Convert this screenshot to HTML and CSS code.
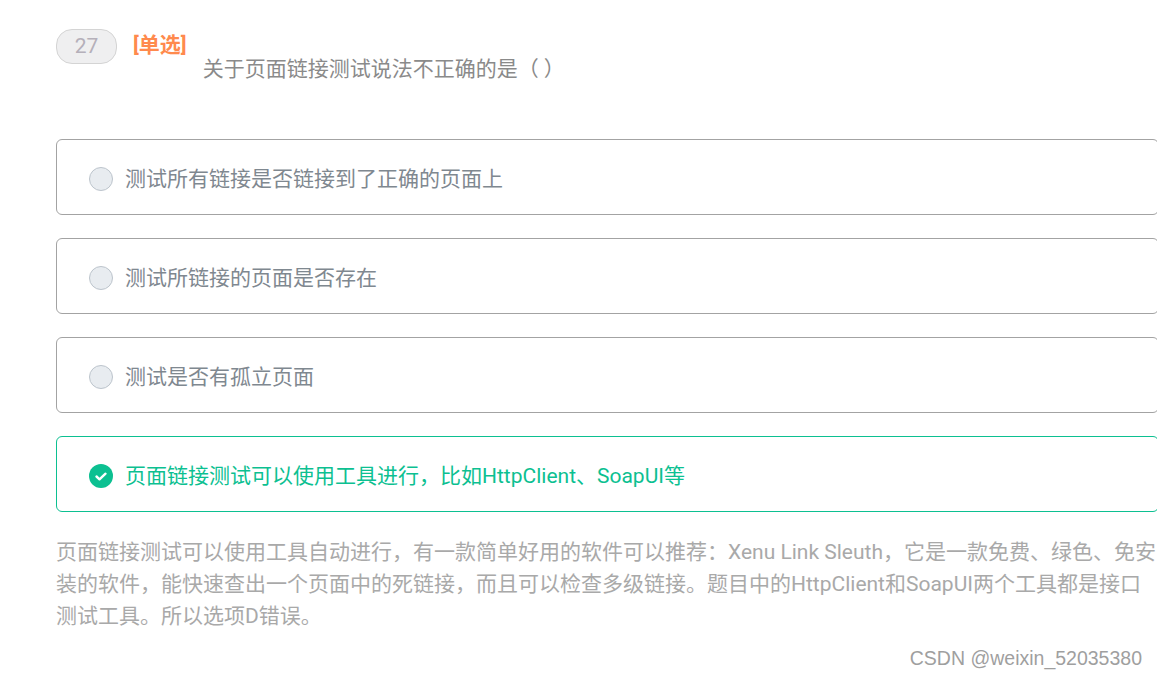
FILE: index.html
```html
<!DOCTYPE html>
<html lang="zh-CN">
<head>
    <meta charset="UTF-8">
    <title>单选题</title>
    <link rel="stylesheet" href="styles.css">
</head>
<body>
    <div class="container">
        <div class="question">
            <span class="question-number">27</span>
            <span class="question-type">[单选]</span>
            <p class="question-text">关于页面链接测试说法不正确的是（ ）</p>
        </div>
        <div class="options">
            <div class="option">
                <span class="radio"></span>
                <span>测试所有链接是否链接到了正确的页面上</span>
            </div>
            <div class="option">
                <span class="radio"></span>
                <span>测试所链接的页面是否存在</span>
            </div>
            <div class="option">
                <span class="radio"></span>
                <span>测试是否有孤立页面</span>
            </div>
            <div class="option correct">
                <svg class="check" viewBox="0 0 24 24">
                    <circle cx="12" cy="12" r="12" fill="#0cc091"/>
                    <path d="M7.5 12.5l3 2.8 6-5.6" fill="none" stroke="#fff" stroke-width="2.4" stroke-linecap="round" stroke-linejoin="round"/>
                </svg>
                <span>页面链接测试可以使用工具进行，比如HttpClient、SoapUI等</span>
            </div>
        </div>
        <p class="analysis">页面链接测试可以使用工具自动进行，有一款简单好用的软件可以推荐：Xenu Link Sleuth，它是一款免费、绿色、免安装的软件，能快速查出一个页面中的死链接，而且可以检查多级链接。题目中的HttpClient和SoapUI两个工具都是接口测试工具。所以选项D错误。</p>
        <div class="watermark">CSDN @weixin_52035380</div>
    </div>
</body>
</html>
```

FILE: styles.css
```css
html, body {
    margin: 0;
    padding: 0;
    background-color: #fff;
    overflow: hidden;
}
body {
    font-family: Roboto, "Noto Sans CJK SC", sans-serif;
}
.container {
    height: 676px;
    padding: 29px 0 0 56px;
    box-sizing: border-box;
}
.question {
    display: flex;
    align-items: flex-start;
    height: 110px;
}
.question-number {
    width: 59px;
    height: 33px;
    border: 1px solid #d4d4d4;
    border-radius: 16px;
    background-color: #efeff0;
    color: #b5b0ba;
    font-size: 21px;
    line-height: 33px;
    text-align: center;
}
.question-type {
    margin-left: 16px;
    color: #ff8a4d;
    font-size: 21px;
    font-weight: 700;
    line-height: 33px;
}
.question-text {
    margin: 23px 0 0 16px;
    color: #8a8a8a;
    font-size: 21px;
    line-height: 34px;
}
.options {
    display: flex;
    flex-direction: column;
    gap: 23px;
}
.option {
    display: flex;
    align-items: center;
    gap: 12px;
    width: 1103px;
    height: 76px;
    padding-left: 32px;
    padding-bottom: 1px;
    box-sizing: border-box;
    border: 1px solid #a3a3a3;
    border-radius: 6px;
    color: #7f8890;
    font-size: 21px;
}
.radio {
    width: 22px;
    height: 22px;
    margin-top: 4px;
    border: 1px solid #bcc4cc;
    border-radius: 50%;
    background-color: #e8ecf0;
}
.check {
    width: 24px;
    height: 24px;
    margin-top: 4px;
}
.option.correct {
    border-color: #0cc091;
    color: #0cc091;
}
.analysis {
    margin: 24px 0 0;
    color: #a9a9a9;
    font-size: 21px;
    line-height: 32px;
}
.watermark {
    margin: 15px 15px 0 0;
    color: #9f9f9f;
    font-family: "Liberation Sans", sans-serif;
    font-size: 19.5px;
    text-align: right;
}
```
